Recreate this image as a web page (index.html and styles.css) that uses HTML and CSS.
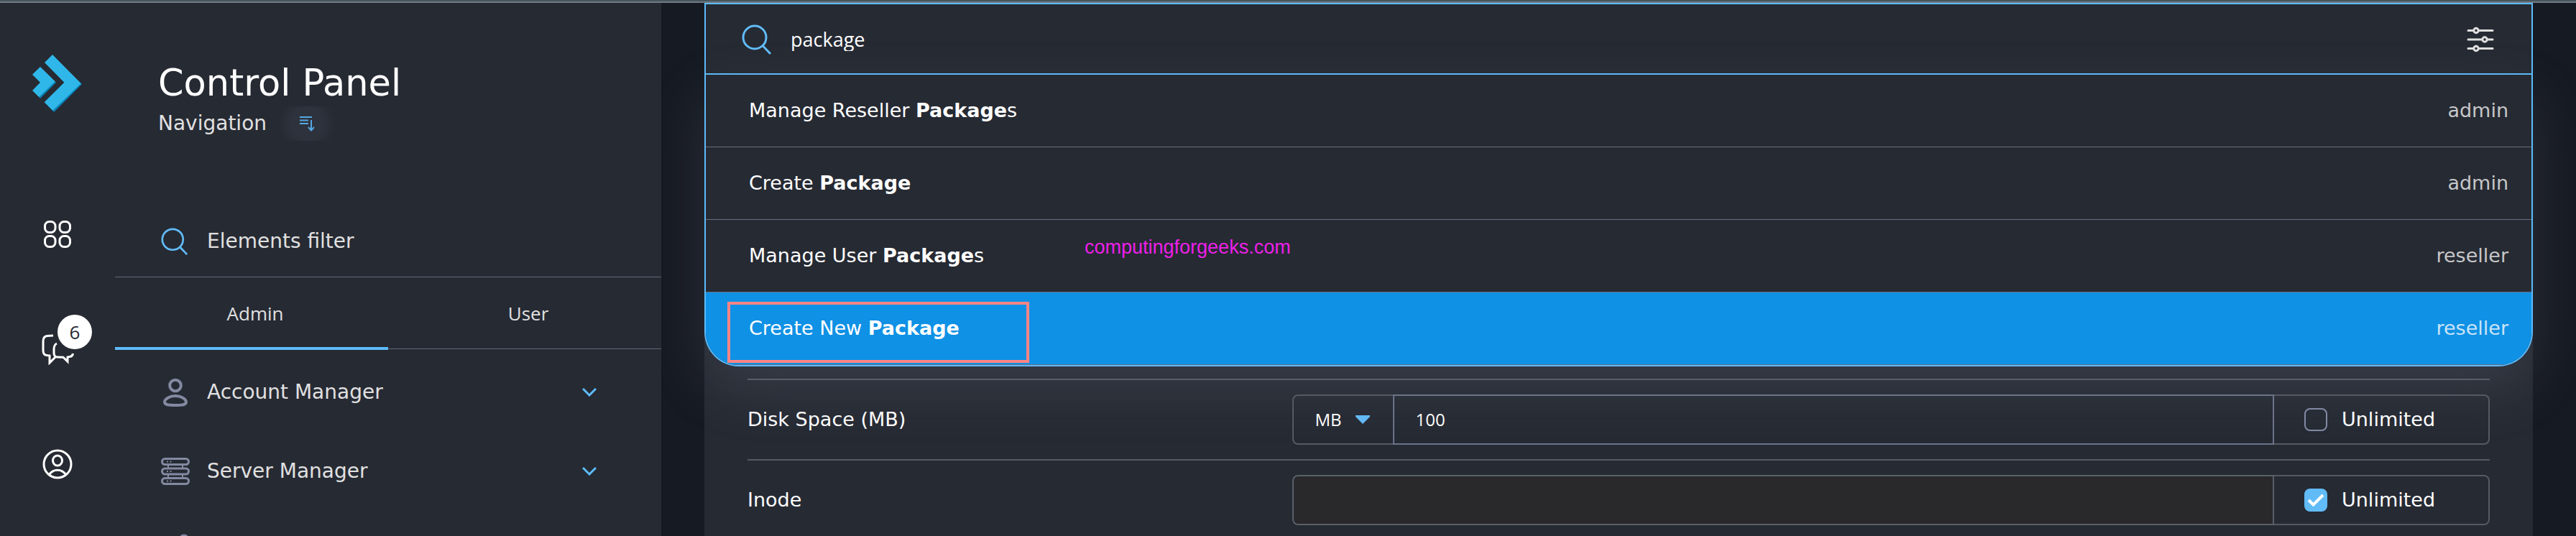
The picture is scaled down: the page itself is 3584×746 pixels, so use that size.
FILE: index.html
```html
<!DOCTYPE html>
<html lang="en">
<head>
    <meta charset="UTF-8">
    <meta name="viewport" content="width=device-width, initial-scale=1.0">
    <title>Control Panel</title>
    <link rel="stylesheet" href="styles.css">
</head>
<body>
    <div class="layout">
        <aside class="rail">
            <a href="#" class="logo" aria-label="Home">
                <svg width="69" height="80" viewBox="138 108 207 240">
                    <path fill="#0784b9" d="M223 342l5 6 117-117-7-6zM166 286l5 5 66-67-6-5z"/>
                    <path fill="#30b7e9" d="M222 108l-33 33 82 83-83 83 35 35 118-114zM171 159l-33 32 33 33-33 34 28 28 67-66z"/>
                </svg>
            </a>
            <button type="button" class="rail-btn" aria-label="Dashboard">
                <svg width="40" height="40" viewBox="0 0 40 40" class="line">
                    <rect x="2.5" y="2.5" width="14.5" height="15" rx="6"/>
                    <rect x="23" y="2.5" width="14.5" height="15" rx="6"/>
                    <rect x="2.5" y="22.5" width="14.5" height="15" rx="6"/>
                    <rect x="23" y="22.5" width="14.5" height="15" rx="6"/>
                </svg>
            </button>
            <button type="button" class="rail-btn" aria-label="Messages">
                <svg width="46" height="44" viewBox="57 464 46 44" class="line">
                    <path d="M74 467l-8 .6q-6 .6-6 7.4v12.500q0 6.500 5 7l4 .5v10l8-8"/>
                    <path d="M79 478q-4 2-4 8v5q0 6 5 6l8 .2 6 6V497q1-.3 3-.4 4-.6 4.500-4.600"/>
                </svg>
                <span class="badge">6</span>
            </button>
            <button type="button" class="rail-btn" aria-label="Profile">
                <svg width="42" height="42" viewBox="0 0 42 42" class="line">
                    <circle cx="21" cy="21" r="19"/>
                    <ellipse cx="21" cy="16" rx="6.500" ry="7"/>
                    <path d="M9.500 35.500C15 27 27 27 32.500 35.500"/>
                </svg>
            </button>
        </aside>

        <nav class="sidebar">
            <h1>Control Panel</h1>
            <div class="subtitle">
                <span>Navigation</span>
                <button type="button" class="sort" aria-label="Change navigation layout">
                    <svg width="22" height="22" viewBox="0 0 22 22" fill="none" stroke="#55a8e2" stroke-width="2">
                        <path d="M1 2h17M1 6.500h12M1 11h12M17 6v14M13 16l4 4.500 4-4.500"/>
                    </svg>
                </button>
            </div>
            <label class="filter">
                <svg width="38" height="38" viewBox="0 0 42 42" class="glass"><circle cx="18" cy="18" r="16"/><path d="M29 29.500L40 41"/></svg>
                <input type="text" placeholder="Elements filter" aria-label="Elements filter">
            </label>
            <div class="tabs" role="tablist">
                <button type="button" role="tab" class="tab active" aria-selected="true">Admin</button>
                <button type="button" role="tab" class="tab" aria-selected="false">User</button>
            </div>
            <ul class="menu">
                <li><a href="#">
                    <svg width="40" height="42" viewBox="0 0 40 42" class="menu-icon thick">
                        <ellipse cx="20" cy="11.500" rx="7.800" ry="7.800"/>
                        <path d="M5 34.500c0-4 7-8.500 15-8.500s15 4.500 15 8.500-5 4.500-15 4.500-15-.5-15-4.500z"/>
                    </svg>
                    <span>Account Manager</span>
                    <svg width="20" height="12" viewBox="0 0 20 12" class="chevron"><path d="M1 1l9 9 9-9"/></svg>
                </a></li>
                <li><a href="#">
                    <svg width="40" height="40" viewBox="0 0 40 40" class="menu-icon">
                        <rect x="1.500" y="2.500" width="37" height="8" rx="4"/>
                        <rect x="1.500" y="16" width="37" height="8" rx="4"/>
                        <rect x="1.500" y="29.500" width="37" height="8" rx="4"/>
                        <path d="M10 11v4.500M30 11v4.500M10 24.500V29M30 24.500V29M8 6.500h2M12.500 6.500h2M8 20h2M12.500 20h2M8 33.500h2M12.500 33.500h2" stroke-width="2"/>
                    </svg>
                    <span>Server Manager</span>
                    <svg width="20" height="12" viewBox="0 0 20 12" class="chevron"><path d="M1 1l9 9 9-9"/></svg>
                </a></li>
                <li><a href="#" aria-label="More">
                    <svg width="40" height="46" viewBox="0 0 40 46" class="menu-icon thick">
                        <circle cx="32" cy="8" r="5.500"/>
                    </svg>
                </a></li>
            </ul>
        </nav>

        <main class="main">
            <div class="search">
                <div class="search-bar">
                    <svg width="42" height="42" viewBox="0 0 42 42" class="glass"><circle cx="18" cy="18" r="16"/><path d="M29 29.500L40 41"/></svg>
                    <input type="text" value="package" aria-label="Search">
                    <button type="button" class="options" aria-label="Search options">
                        <svg width="38" height="36" viewBox="0 0 38 36" fill="none" stroke="#dfdfdf" stroke-width="3" stroke-linecap="round">
                            <path d="M2 5.500h7M17 5.500h19M2 18h19M29 18h7M2 30.500h7M17 30.500h19"/>
                            <circle cx="13" cy="5.500" r="3.200"/>
                            <circle cx="25" cy="18" r="3.200"/>
                            <circle cx="13" cy="30.500" r="3.200"/>
                        </svg>
                    </button>
                </div>
                <div class="results">
                    <a href="#"><span>Manage Reseller <b>Package</b>s</span><span class="level">admin</span></a>
                    <a href="#"><span>Create <b>Package</b></span><span class="level">admin</span></a>
                    <a href="#"><span>Manage User <b>Package</b>s</span><span class="level">reseller</span></a>
                    <a href="#" class="selected"><span>Create New <b>Package</b></span><span class="level">reseller</span></a>
                </div>
                <div class="highlight"></div>
                <div class="watermark">computingforgeeks.com</div>
            </div>

            <form class="limits">
                <div class="row">
                    <label for="disk">Disk Space (MB)</label>
                    <div class="field">
                        <div class="unit">
                            <select aria-label="Disk space unit">
                                <option>MB</option>
                                <option>GB</option>
                            </select>
                            <svg width="20" height="12" viewBox="0 0 20 12" class="caret"><path d="M0 0h20v2L10 12 0 2z"/></svg>
                        </div>
                        <input type="text" id="disk" class="amount" value="100">
                        <label class="unlimited"><input type="checkbox"><span>Unlimited</span></label>
                    </div>
                </div>
                <div class="row">
                    <label for="inode">Inode</label>
                    <div class="field">
                        <input type="text" id="inode" class="amount disabled" disabled>
                        <label class="unlimited">
                            <input type="checkbox" checked>
                            <svg width="24" height="18" viewBox="0 0 24 18" class="tick"><path d="M2 9l6.500 6.500L22 2"/></svg>
                            <span>Unlimited</span>
                        </label>
                    </div>
                </div>
            </form>
        </main>
    </div>
</body>
</html>
```

FILE: styles.css
```css
* {
    box-sizing: border-box;
}
body {
    margin: 0;
    height: 100vh;
    overflow: hidden;
    background-color: #161a22;
    border-top: 2px solid #46555e;
    font-family: "DejaVu Sans", sans-serif;
    font-size: 27px;
    line-height: 32px;
    color: #fff;
}
a {
    color: inherit;
    text-decoration: none;
}
button, input, select {
    font: inherit;
    color: inherit;
    background: none;
    border: none;
    padding: 0;
    margin: 0;
    outline: none;
}
svg {
    display: block;
    flex-shrink: 0;
}
.layout {
    display: flex;
    height: 100%;
    border-top: 2px solid #707a80;
    overflow: hidden;
}
.line {
    fill: none;
    stroke: #fff;
    stroke-width: 3;
}
.glass {
    fill: none;
    stroke: #61bbf7;
    stroke-width: 3;
}

/* icon rail */
.rail {
    position: relative;
    z-index: 1;
    flex: 0 0 160px;
    display: flex;
    flex-direction: column;
    align-items: center;
    padding-top: 72px;
    background-color: #262a33;
    border-right: 1px solid #23272f;
}
.logo {
    margin-bottom: 90px;
}
.rail-btn {
    position: relative;
    flex: 0 0 160px;
    width: 100%;
    display: flex;
    align-items: center;
    justify-content: center;
}
.badge {
    position: absolute;
    top: 32px;
    left: 80px;
    width: 48px;
    height: 48px;
    border-radius: 50%;
    background-color: #fff;
    color: #262a33;
    font-family: "Open Sans", sans-serif;
    font-size: 26px;
    line-height: 48px;
    text-align: center;
}

/* navigation */
.sidebar {
    position: relative;
    z-index: 1;
    flex: 0 0 760px;
    display: flex;
    flex-direction: column;
    padding-top: 82px;
    background-color: #262a33;
    color: #e0e0e0;
    font-size: 28px;
}
h1 {
    margin: 0 0 2px;
    padding-left: 60px;
    font-size: 51px;
    font-weight: normal;
    line-height: 60px;
    color: #fff;
}
.subtitle {
    display: flex;
    align-items: center;
    height: 48px;
    padding-left: 60px;
}
.sort {
    display: flex;
    align-items: center;
    justify-content: center;
    width: 84px;
    height: 48px;
    margin-left: 14px;
    background: radial-gradient(circle, #2e323c 22px, #262a33 40px);
}
.filter {
    display: flex;
    align-items: center;
    gap: 26px;
    height: 100px;
    margin-top: 90px;
    padding-left: 64px;
    border-bottom: 1px solid #5f677d;
}
.filter input {
    flex: 1;
}
.filter input::placeholder {
    color: #e0e0e0;
    opacity: 1;
}
.tabs {
    flex-shrink: 0;
    display: flex;
    height: 100px;
    border-bottom: 1px solid #5f677d;
}
.tab {
    position: relative;
    flex: 1;
    padding-left: 10px;
    font-family: "Open Sans", sans-serif;
    font-size: 26px;
}
.tab.active::after {
    content: "";
    position: absolute;
    left: 0;
    right: 0;
    bottom: -2px;
    height: 4px;
    background-color: #5dbbfa;
}
.menu {
    flex: 1;
    min-height: 0;
    overflow: hidden;
    margin: 0;
    padding: 5px 90px 0 64px;
    list-style: none;
}
.menu a {
    display: flex;
    align-items: center;
    gap: 24px;
    height: 110px;
}
.menu span {
    flex: 1;
}
.menu-icon {
    fill: none;
    stroke: #8389a0;
    stroke-width: 3;
}
.menu-icon.thick {
    stroke-width: 4;
}
.chevron {
    fill: none;
    stroke: #5dbbfa;
    stroke-width: 3;
}

/* search */
.main {
    flex: 1;
    min-width: 0;
    margin: 0 60px;
    background-color: #262a33;
}
.search {
    position: relative;
}
.search-bar {
    display: flex;
    align-items: center;
    height: 100px;
    padding: 2px 52px 0 50px;
    border: 2px solid #5dbbfa;
}
.search-bar input {
    flex: 1;
    margin-left: 26px;
    font-family: "Open Sans", sans-serif;
    font-size: 27px;
}
.results {
    overflow: hidden;
    border: 2px solid #5dbbfa;
    border-top: none;
    border-radius: 0 0 48px 48px;
    background-color: #262a33;
    box-shadow: 0 30px 80px rgba(130, 135, 150, 0.2);
}
.results a {
    display: flex;
    align-items: center;
    justify-content: space-between;
    height: 101px;
    padding: 0 32px 0 60px;
    border-bottom: 1px solid #666d7e;
}
.level {
    color: #c6c7c9;
}
.results .selected {
    background-color: #0f91e5;
}
.selected .level {
    color: #cae4f8;
}
.highlight {
    position: absolute;
    left: 32px;
    bottom: 5px;
    width: 420px;
    height: 85px;
    border: 4px solid #ff8585;
}
.watermark {
    position: absolute;
    left: 529px;
    top: 324px;
    font-family: "Liberation Sans", sans-serif;
    color: #ed1fe8;
}

/* limits form */
.limits {
    padding: 17px 60px 0;
}
.row {
    display: grid;
    grid-template-columns: 5fr 11fr;
    align-items: center;
    height: 112px;
    border-top: 2px solid #555963;
}
.field {
    display: flex;
    height: 70px;
}
.unit {
    position: relative;
    flex: 0 0 140px;
}
.unit select {
    appearance: none;
    width: 100%;
    height: 100%;
    padding-left: 30px;
    border: 2px solid #555963;
    border-right: none;
    border-radius: 8px 0 0 8px;
    font-family: "Open Sans", sans-serif;
    font-size: 24px;
}
.caret {
    position: absolute;
    top: 29px;
    right: 32px;
    fill: #63b9f5;
    pointer-events: none;
}
.amount {
    flex: 1;
    min-width: 0;
    padding: 0 30px;
    border: 2px solid #6c7389;
    font-family: "Open Sans", sans-serif;
    font-size: 24px;
}
.amount.disabled {
    background-color: #29292c;
    border-color: #596068;
    border-radius: 8px 0 0 8px;
}
.unlimited {
    position: relative;
    flex: 0 0 300px;
    display: flex;
    align-items: center;
    gap: 20px;
    padding-left: 42px;
    border: 2px solid #555963;
    border-left: none;
    border-radius: 0 8px 8px 0;
}
.unlimited input {
    appearance: none;
    width: 32px;
    height: 32px;
    border: 2px solid #8289a3;
    border-radius: 8px;
}
.unlimited input:checked {
    background-color: #61bbf7;
    border-color: #61bbf7;
}
.tick {
    position: absolute;
    left: 46px;
    fill: none;
    stroke: #fff;
    stroke-width: 4;
}
```
